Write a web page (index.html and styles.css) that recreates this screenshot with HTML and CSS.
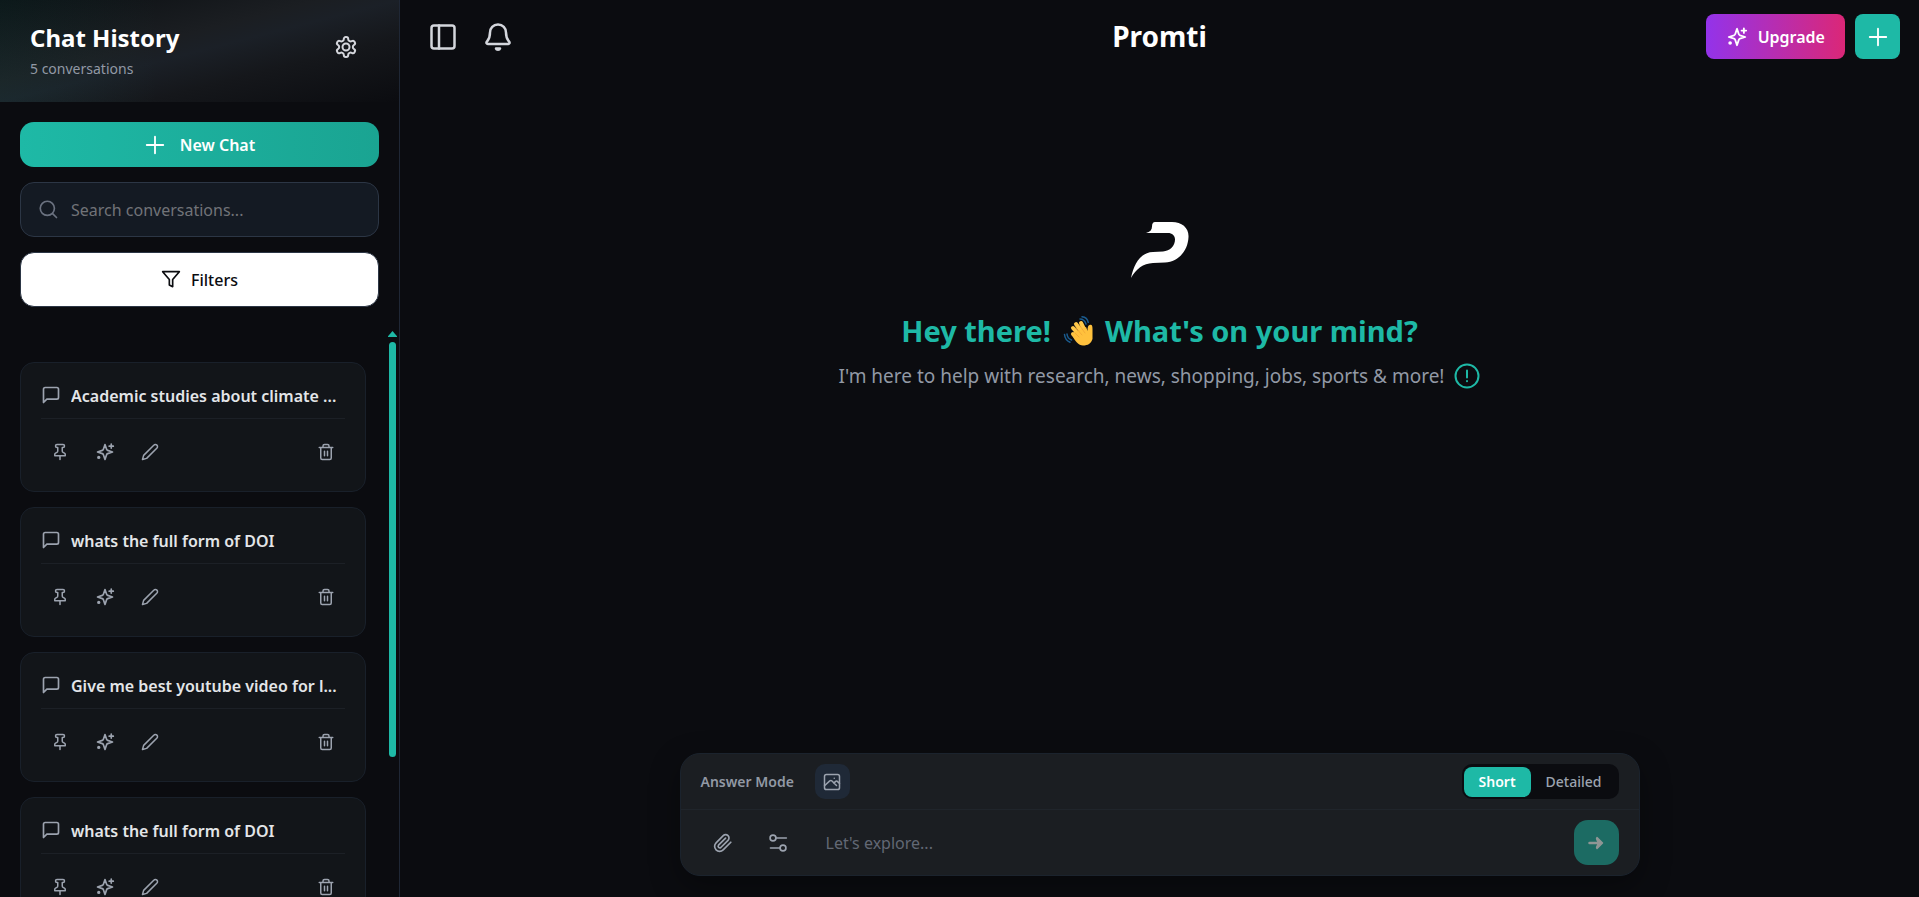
FILE: index.html
```html
<!DOCTYPE html>
<html lang="en">
<head>
<meta charset="utf-8">
<meta name="viewport" content="width=device-width, initial-scale=1">
<title>Promti</title>
<link rel="stylesheet" href="styles.css">
</head>
<body>
<svg class="sprite" aria-hidden="true">
  <symbol id="i-plus" viewBox="0 0 24 24"><path d="M12 3v18M3 12h18"/></symbol>
  <symbol id="i-chat" viewBox="0 0 24 24"><path d="M21 15a2 2 0 0 1-2 2H7l-4 4V5a2 2 0 0 1 2-2h14a2 2 0 0 1 2 2z"/></symbol>
  <symbol id="i-pin" viewBox="0 0 24 24"><path d="M12 17v5M5 17h14v-1.760a2 2 0 0 0-1.110-1.790l-1.780-.9A2 2 0 0 1 15 10.760V6h1a2 2 0 0 0 0-4H8a2 2 0 0 0 0 4h1v4.760a2 2 0 0 1-1.110 1.790l-1.780.9A2 2 0 0 0 5 15.240Z"/></symbol>
  <symbol id="i-sparkles" viewBox="0 0 24 24"><path d="m12 3-1.900 5.800a2 2 0 0 1-1.300 1.300L3 12l5.800 1.900a2 2 0 0 1 1.300 1.300L12 21l1.900-5.800a2 2 0 0 1 1.300-1.300L21 12l-5.800-1.900a2 2 0 0 1-1.300-1.300Z"/><path d="M19.500 2.500v5M17 5h5"/><circle cx="4.500" cy="18.500" r="1"/></symbol>
  <symbol id="i-pencil" viewBox="0 0 24 24"><path d="M17 3a2.850 2.830 0 1 1 4 4L7.500 20.500 2 22l1.500-5.500Z"/></symbol>
  <symbol id="i-trash" viewBox="0 0 24 24"><path d="M3 6h18M19 6v14a2 2 0 0 1-2 2H7a2 2 0 0 1-2-2V6M8 6V4a2 2 0 0 1 2-2h4a2 2 0 0 1 2 2v2M10 11v6M14 11v6"/></symbol>
</svg>

<div class="app">
  <aside class="sidebar">
    <header class="side-head">
      <div>
        <h2 class="side-title">Chat History</h2>
        <p class="side-count">5 conversations</p>
      </div>
      <button class="icon-btn settings" type="button" aria-label="Settings">
        <svg class="ico ico-24" viewBox="0 0 24 24"><path d="M12.220 2h-.44a2 2 0 0 0-2 2v.18a2 2 0 0 1-1 1.730l-.43.25a2 2 0 0 1-2 0l-.15-.08a2 2 0 0 0-2.730.73l-.22.38a2 2 0 0 0 .73 2.730l.15.1a2 2 0 0 1 1 1.720v.51a2 2 0 0 1-1 1.740l-.15.09a2 2 0 0 0-.73 2.730l.22.38a2 2 0 0 0 2.730.73l.15-.08a2 2 0 0 1 2 0l.43.25a2 2 0 0 1 1 1.730V20a2 2 0 0 0 2 2h.44a2 2 0 0 0 2-2v-.18a2 2 0 0 1 1-1.730l.43-.25a2 2 0 0 1 2 0l.15.08a2 2 0 0 0 2.730-.73l.22-.39a2 2 0 0 0-.73-2.730l-.15-.08a2 2 0 0 1-1-1.740v-.5a2 2 0 0 1 1-1.740l.15-.09a2 2 0 0 0 .73-2.730l-.22-.38a2 2 0 0 0-2.730-.73l-.15.08a2 2 0 0 1-2 0l-.43-.25a2 2 0 0 1-1-1.730V4a2 2 0 0 0-2-2z"/><circle cx="12" cy="12" r="3.500"/></svg>
      </button>
    </header>

    <div class="side-tools">
      <button class="new-chat" type="button"><svg class="ico ico-22"><use href="#i-plus"/></svg>New Chat</button>
      <label class="search">
        <svg class="ico ico-20" viewBox="0 0 24 24"><circle cx="10" cy="10" r="8.500"/><path d="m16.300 16.300 4.700 4.700"/></svg>
        <input class="search-input" type="text" placeholder="Search conversations..." aria-label="Search conversations">
      </label>
      <button class="filters" type="button"><svg class="ico ico-20" viewBox="0 0 24 24"><path d="M22 2H2l8 9.460V18l4 2v-8.540z"/></svg>Filters</button>
    </div>

    <div class="history">
      <ul class="chat-list">
        <li class="chat-card">
          <div class="chat-name"><svg class="ico ico-20"><use href="#i-chat"/></svg><span class="chat-text">Academic studies about climate ...</span></div>
          <div class="chat-actions">
            <button class="act" type="button" aria-label="Pin"><svg class="ico ico-18"><use href="#i-pin"/></svg></button>
            <button class="act" type="button" aria-label="Enhance"><svg class="ico ico-20"><use href="#i-sparkles"/></svg></button>
            <button class="act" type="button" aria-label="Rename"><svg class="ico ico-18"><use href="#i-pencil"/></svg></button>
            <button class="act act-end" type="button" aria-label="Delete"><svg class="ico ico-18"><use href="#i-trash"/></svg></button>
          </div>
        </li>
        <li class="chat-card">
          <div class="chat-name"><svg class="ico ico-20"><use href="#i-chat"/></svg><span class="chat-text">whats the full form of DOI</span></div>
          <div class="chat-actions">
            <button class="act" type="button" aria-label="Pin"><svg class="ico ico-18"><use href="#i-pin"/></svg></button>
            <button class="act" type="button" aria-label="Enhance"><svg class="ico ico-20"><use href="#i-sparkles"/></svg></button>
            <button class="act" type="button" aria-label="Rename"><svg class="ico ico-18"><use href="#i-pencil"/></svg></button>
            <button class="act act-end" type="button" aria-label="Delete"><svg class="ico ico-18"><use href="#i-trash"/></svg></button>
          </div>
        </li>
        <li class="chat-card">
          <div class="chat-name"><svg class="ico ico-20"><use href="#i-chat"/></svg><span class="chat-text">Give me best youtube video for l...</span></div>
          <div class="chat-actions">
            <button class="act" type="button" aria-label="Pin"><svg class="ico ico-18"><use href="#i-pin"/></svg></button>
            <button class="act" type="button" aria-label="Enhance"><svg class="ico ico-20"><use href="#i-sparkles"/></svg></button>
            <button class="act" type="button" aria-label="Rename"><svg class="ico ico-18"><use href="#i-pencil"/></svg></button>
            <button class="act act-end" type="button" aria-label="Delete"><svg class="ico ico-18"><use href="#i-trash"/></svg></button>
          </div>
        </li>
        <li class="chat-card">
          <div class="chat-name"><svg class="ico ico-20"><use href="#i-chat"/></svg><span class="chat-text">whats the full form of DOI</span></div>
          <div class="chat-actions">
            <button class="act" type="button" aria-label="Pin"><svg class="ico ico-18"><use href="#i-pin"/></svg></button>
            <button class="act" type="button" aria-label="Enhance"><svg class="ico ico-20"><use href="#i-sparkles"/></svg></button>
            <button class="act" type="button" aria-label="Rename"><svg class="ico ico-18"><use href="#i-pencil"/></svg></button>
            <button class="act act-end" type="button" aria-label="Delete"><svg class="ico ico-18"><use href="#i-trash"/></svg></button>
          </div>
        </li>
      </ul>
      <div class="scroll-track" aria-hidden="true">
        <svg class="scroll-arrow" viewBox="0 0 9 6"><path d="M4.500 0 9 5.200V6H0v-.8z"/></svg>
        <div class="scroll-thumb"></div>
      </div>
    </div>
  </aside>

  <main class="main">
    <header class="topbar">
      <div class="top-left">
        <button class="icon-btn" type="button" aria-label="Toggle sidebar"><svg class="ico ico-26 ico-bold" viewBox="0 0 26 26"><rect x="1.500" y="1.500" width="23" height="23" rx="2.500"/><path d="M9 1.500v23"/></svg></button>
        <button class="icon-btn" type="button" aria-label="Notifications"><svg class="ico ico-28 ico-bold" viewBox="0 0 28 28"><path d="M14 1.500c-4.800 0-8 3.500-8 8 0 6-1.700 7.300-3.200 9.200-.8 1.100-.2 2.300 1 2.300h20.400c1.200 0 1.800-1.200 1-2.300C23.700 16.800 22 15.500 22 9.500c0-4.500-3.200-8-8-8zM12 25.500c.5 1.500 3.500 1.500 4 0z"/></svg></button>
      </div>
      <h1 class="brand">Promti</h1>
      <div class="top-right">
        <button class="upgrade" type="button"><svg class="ico ico-22"><use href="#i-sparkles"/></svg>Upgrade</button>
        <button class="add" type="button" aria-label="New chat"><svg class="ico ico-22"><use href="#i-plus"/></svg></button>
      </div>
    </header>

    <section class="hero">
      <svg class="logo" viewBox="0 0 58 56" role="img" aria-label="Promti"><path d="M24 0H41C51 0 58 6 57.500 15 57 28 48 40 34 40.500L22 41C12 41.500 5 47 0 56 3 42 9 30.500 22 30L32 29.500C39 29 44 24 44 17.500 44 13.500 41 11 37 11H15C19 10 21 8 21 4.500 21 1.500 22 0 24 0Z"/></svg>
      <h2 class="greeting"><span>Hey there!</span>
        <svg class="wave" viewBox="0 0 30 30" role="img" aria-label="Waving hand"><g fill="none" stroke="#1b5c8f" stroke-width="1.500" stroke-linecap="round"><path d="M17 3c3 0 5 2 6 5M19 .8c3.500.3 5.700 2.700 6.200 5.500M4 18c.3 3 1.700 5 4.500 6M1.500 18.500c.4 4 2.500 6.500 5.500 7.700"/></g><g fill="none" stroke="#ffc84a" stroke-width="4" stroke-linecap="round"><path d="m10 18 6 6M10 12l8 9M13 8l8 11M18 7l5 10"/></g><path fill="#ffc13d" d="m12 16 11-5 1.500 4c0-4 .5-6 2.800-6.300 2-.2 2.200 2 2.200 4.300V23c-1.500 4.500-4.500 6.500-9.500 6.500-4.500 0-8-4.500-11-10.500z"/><path fill="none" stroke="#f0a535" stroke-width=".8" stroke-linecap="round" d="m12 17 4 4M13 12l6 7M17 10l5 7"/></svg>
        <span>What's on your mind?</span></h2>
      <p class="tagline">I'm here to help with research, news, shopping, jobs, sports &amp; more!
        <button class="info" type="button" aria-label="More information"><svg class="ico ico-26" viewBox="0 0 26 26"><circle cx="13" cy="13" r="11.500"/><path d="M13 7.500v7M13 18v.3"/></svg></button></p>
    </section>

    <form class="composer">
      <div class="mode-row">
        <span class="mode-label">Answer Mode</span>
        <button class="image-btn" type="button" aria-label="Images"><svg class="ico ico-18" viewBox="0 0 24 24"><rect x="2" y="2" width="20" height="20" rx="2.500"/><path d="m2 17 7-6.500c1-.8 2-.8 3 .2l6 6M14.500 13.500l2-2c1-1 2-1 3 0L22 14M15 7v.1"/></svg></button>
        <div class="segment" role="group" aria-label="Answer Mode">
          <button class="seg seg-on" type="button" aria-pressed="true">Short</button>
          <button class="seg" type="button" aria-pressed="false">Detailed</button>
        </div>
      </div>
      <div class="input-row">
        <button class="tool" type="button" aria-label="Attach file"><svg class="ico ico-20" viewBox="0 0 24 24"><path d="m21.400 11.100-9.200 9.200a6 6 0 0 1-8.500-8.500l8.600-8.600a4 4 0 1 1 5.700 5.700l-8.600 8.500a2 2 0 0 1-2.800-2.800l8.500-8.500"/></svg></button>
        <button class="tool" type="button" aria-label="Options"><svg class="ico ico-20" viewBox="0 0 24 24"><circle cx="6" cy="6" r="3.500"/><path d="M9.500 6H22M3 18h11.500"/><circle cx="18" cy="18" r="3.500"/></svg></button>
        <input class="prompt" type="text" placeholder="Let's explore..." aria-label="Message">
        <button class="send" type="button" aria-label="Send"><svg class="send-ico" viewBox="0 0 16 14"><path d="M1.500 7H10" stroke-width="2.500" stroke-linecap="round"/><path d="m9 1.500 5.500 5.500L9 12.500c-.8-.8-.8-1 0-2.500L10.500 7 9 4C8.200 2.500 8.200 2.300 9 1.500z" fill="currentColor" stroke-width="1.500" stroke-linejoin="round"/></svg></button>
      </div>
    </form>
  </main>
</div>
</body>
</html>
```
FILE: styles.css
```css
* { box-sizing: border-box; }

body {
  margin: 0;
  background: #0b0c10;
  color: #fff;
  font-family: "Noto Sans", "Open Sans", sans-serif;
  font-size: 16px;
  line-height: 24px;
  overflow: hidden;
}

h1, h2, p, ul { margin: 0; padding: 0; }
ul { list-style: none; }

button, input { font: inherit; color: inherit; }
button {
  display: flex;
  align-items: center;
  justify-content: center;
  margin: 0;
  padding: 0;
  border: 0;
  background: none;
  cursor: pointer;
}
input { border: 0; background: none; outline: 0; min-width: 0; flex: 1; padding: 0; }

.sprite { display: none; }
.ico {
  flex: none;
  fill: none;
  stroke: currentColor;
  stroke-width: 2;
  stroke-linecap: round;
  stroke-linejoin: round;
}
.ico-18 { width: 18px; height: 18px; }
.ico-20 { width: 20px; height: 20px; }
.ico-22 { width: 22px; height: 22px; }
.ico-24 { width: 24px; height: 24px; }
.ico-26 { width: 26px; height: 26px; }
.ico-28 { width: 28px; height: 28px; }
.ico-bold { stroke-width: 2.5; }

.app { display: flex; height: 100vh; }

/* Sidebar */
.sidebar {
  display: flex;
  flex-direction: column;
  flex: none;
  width: 400px;
  border-right: 1px solid #1f2735;
}
.side-head {
  display: flex;
  align-items: flex-start;
  justify-content: space-between;
  padding: 20px 41px 20px 30px;
  background:
    linear-gradient(to right, rgba(28, 185, 164, 0.06), transparent 40%),
    linear-gradient(to bottom right, #0b0f12 0%, #1b1e22 40%, #1b2027 50%, #15171b 68%, #0b0c10 100%);
}
.side-title { font-size: 24px; line-height: 36px; font-weight: 700; }
.side-count { font-size: 14px; line-height: 26px; color: #9299a5; }
.icon-btn { color: #d4d6dc; }
.settings { height: 54px; }

.side-tools { display: flex; flex-direction: column; gap: 15px; padding: 20px 20px 0; }
.new-chat {
  gap: 14px;
  height: 45px;
  border-radius: 14px;
  background: linear-gradient(to right, #1eb9a6, #1aa492);
  font-weight: 600;
}
.search {
  display: flex;
  align-items: center;
  gap: 12px;
  height: 55px;
  padding: 0 18px;
  border: 1px solid #2c3645;
  border-radius: 14px;
  background: #141a23;
  color: #6b7280;
}
.search-input::placeholder { color: #717378; opacity: 1; }
.filters {
  gap: 10px;
  height: 55px;
  border: 1px solid #2c3645;
  border-radius: 14px;
  background: #fff;
  color: #0b0c10;
  font-weight: 500;
}

.history {
  display: flex;
  flex: 1;
  min-height: 0;
  margin-top: 20px;
  overflow: hidden;
}
.chat-list {
  display: flex;
  flex: 1;
  flex-direction: column;
  gap: 15px;
  min-width: 0;
  padding: 35px 22px 0 20px;
}
.chat-card {
  flex: none;
  padding: 18px 20px 19px;
  border: 1px solid #19202a;
  border-radius: 14px;
  background: #121519;
  color: #9ca3af;
}
.chat-name {
  display: flex;
  align-items: flex-start;
  gap: 10px;
  padding-bottom: 6px;
  border-bottom: 1px solid #1c2026;
}
.chat-name .ico { margin-top: 4px; }
.chat-text {
  flex: 1;
  color: #e3e5e8;
  line-height: 31px;
  font-weight: 600;
  white-space: nowrap;
  overflow: hidden;
}
.chat-actions { display: flex; padding-top: 13px; }
.act { width: 38px; height: 40px; margin-right: 7px; }
.act-end { margin: 0 0 0 auto; }

.scroll-track {
  display: flex;
  flex-direction: column;
  align-items: center;
  gap: 5px;
  flex: none;
  width: 9px;
  margin-right: 2px;
  padding: 4px 0 140px;
}
.scroll-arrow { flex: none; width: 9px; height: 6px; fill: #1eb9a6; }
.scroll-thumb { flex: 1; width: 7px; border-radius: 4px; background: #1eb9a6; }

/* Main */
.main { display: flex; flex: 1; flex-direction: column; min-width: 0; }
.topbar {
  display: grid;
  grid-template-columns: 1fr auto 1fr;
  align-items: center;
  padding: 14px 19px 0;
}
.top-left { display: flex; align-items: center; gap: 28px; padding-left: 11px; }
.brand { font-size: 28px; line-height: 45px; font-weight: 700; }
.top-right { display: flex; justify-content: flex-end; gap: 10px; }
.upgrade {
  gap: 10px;
  height: 45px;
  padding: 0 20px;
  border-radius: 8px;
  background: linear-gradient(to right, #9333ea, #db2777);
  font-weight: 600;
}
.add { width: 45px; height: 45px; border-radius: 8px; background: #1eb9a6; }

.hero {
  display: flex;
  flex: 1;
  flex-direction: column;
  align-items: center;
  padding-top: 163px;
}
.logo { width: 58px; height: 56px; fill: #fff; }
.greeting {
  display: flex;
  align-items: center;
  gap: 12px;
  margin-top: 31px;
  color: #1eb9a6;
  font-size: 29px;
  line-height: 44px;
  font-weight: 700;
}
.wave { width: 30px; height: 30px; }
.tagline {
  display: flex;
  align-items: center;
  gap: 10px;
  margin-top: 8px;
  color: #9299a5;
  font-size: 19px;
  line-height: 30px;
}
.info { color: #1eb9a6; }

.composer {
  width: calc(100% - 40px);
  max-width: 960px;
  margin: 0 auto 21px;
  border: 1px solid #1b232d;
  border-radius: 20px;
  background: #1b1e22;
  box-shadow: 0 10px 30px rgba(0, 0, 0, 0.35);
}
.mode-row {
  display: flex;
  align-items: center;
  gap: 21px;
  padding: 10px 20px;
  border-bottom: 1px solid #20252b;
}
.mode-label { color: #9299a5; font-size: 14px; font-weight: 600; }
.image-btn { width: 35px; height: 35px; border-radius: 10px; background: #1f2937; color: #9ca3af; }
.segment {
  display: flex;
  align-items: center;
  height: 35px;
  margin-left: auto;
  padding: 0 2px;
  border-radius: 10px;
  background: #0b0c10;
}
.seg { height: 30px; padding: 0 15px; border-radius: 8px; color: #9ca3af; font-size: 14px; font-weight: 500; }
.seg-on { background: #1eb9a6; color: #fff; font-weight: 600; }

.input-row { display: flex; align-items: center; padding: 10px 20px; }
.tool { width: 45px; height: 45px; margin-right: 10px; color: #9ca3af; }
.prompt { height: 45px; padding-left: 15px; }
.prompt::placeholder { color: #626874; opacity: 1; }
.send { width: 45px; height: 45px; border-radius: 14px; background: #1c6b63; color: #8f9695; }
.send-ico { width: 16px; height: 14px; fill: none; stroke: currentColor; }
```
